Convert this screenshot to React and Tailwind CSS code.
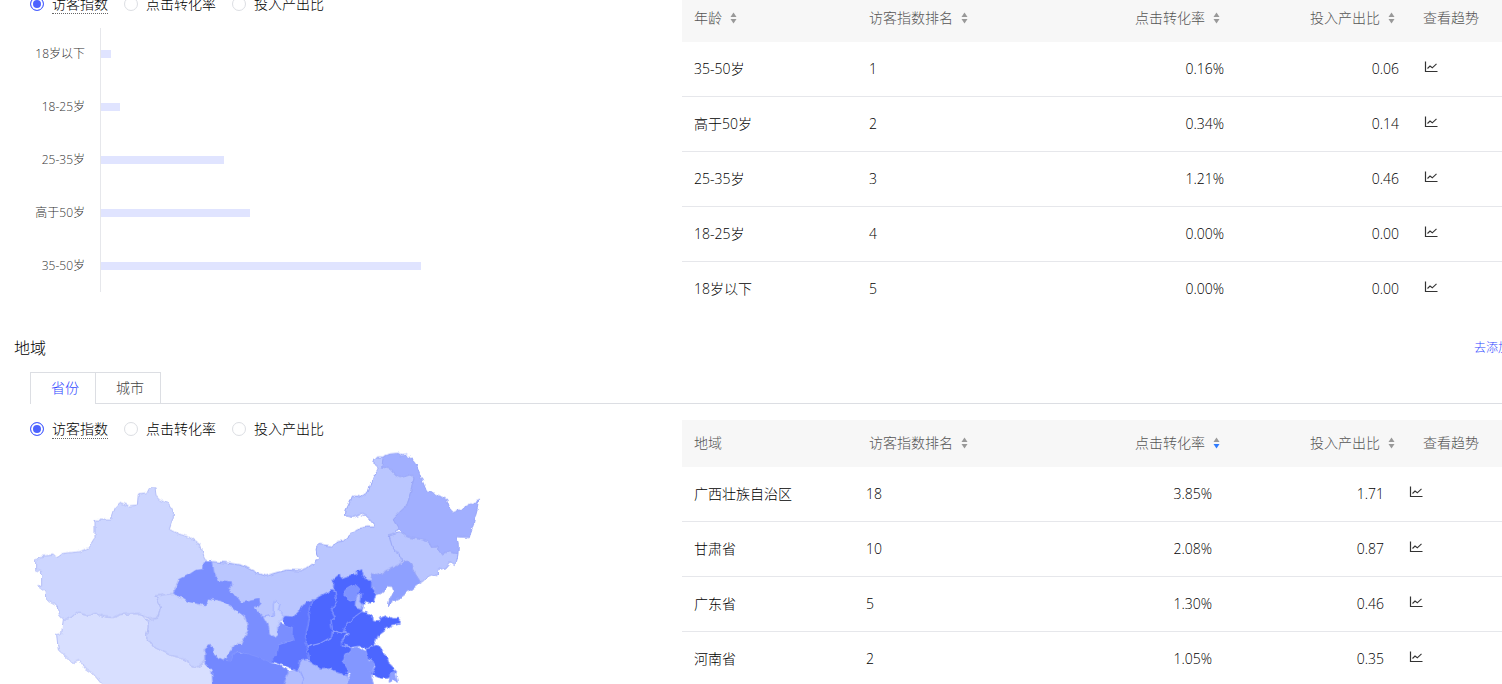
const METRICS = ['访客指数', '点击转化率', '投入产出比'];

const AGE_BARS = [
    { label: '18岁以下', value: 1.8 },
    { label: '18-25岁', value: 3.3 },
    { label: '25-35岁', value: 21.1 },
    { label: '高于50岁', value: 25.6 },
    { label: '35-50岁', value: 55.1 },
];

const AGE_ROWS = [
    ['35-50岁', '1', '0.16%', '0.06'],
    ['高于50岁', '2', '0.34%', '0.14'],
    ['25-35岁', '3', '1.21%', '0.46'],
    ['18-25岁', '4', '0.00%', '0.00'],
    ['18岁以下', '5', '0.00%', '0.00'],
];

const REGION_ROWS = [
    ['广西壮族自治区', '18', '3.85%', '1.71'],
    ['甘肃省', '10', '2.08%', '0.87'],
    ['广东省', '5', '1.30%', '0.46'],
    ['河南省', '2', '1.05%', '0.35'],
];

const WEST = [
    { name: '西藏', fill: '#d8dfff', d: 'M100 448L120 445L140 427L170 436L200 430L225 441L250 442L275 433L330 430L350 450L355 470L350 500L370 530L420 555L460 565L480 585L505 590L525 573L540 585L550 610L552 660L235 660L215 642L190 612L165 595L150 572L130 578L85 540L80 495L95 490Z' },
    { name: '新疆', fill: '#cdd6ff', d: 'M100 448L88 435L85 410L48 390L45 365L22 348L35 345L35 305L17 300L17 275L30 260L68 255L80 263L100 250L150 245L178 232L195 205L195 155L190 150L243 150L255 115L270 97L295 108L322 105L325 72L350 68L358 52L375 53L378 75L392 90L415 100L430 120L430 140L418 178L440 190L475 200L512 225L522 260L530 273L522 295L445 330L428 370L378 378L392 410L385 440L350 445L330 430L275 433L250 442L225 441L200 430L170 436L140 427L120 445Z' },
    { name: '青海', fill: '#c9d3ff', d: 'M378 378L430 370L450 385L515 405L535 380L600 400L640 435L655 480L635 520L605 530L615 555L605 572L555 565L540 523L522 535L525 570L505 590L480 585L460 565L420 555L370 530L350 500L355 470L350 450L385 440L392 410Z' },
];

const NORTH = [
    { name: '内蒙古', fill: '#bac6ff', d: 'M222 58L222 48L232 36L255 36L335 82L342 100L330 150L290 260L305 350L225 435L110 480L0 520L-80 515L-110 517L-130 500L-190 480L-240 435L-270 395L-280 355L-262 350L-220 353L-180 360L-165 365L-130 383L-102 393L-75 385L-40 375L0 377L20 370L40 355L57 340L50 330L48 308L60 298L95 303L115 290L130 288L155 265L180 250L200 246L222 246L222 240L205 218L185 208L160 217L135 212L138 195L150 170L157 150L180 157L205 140L215 105L235 70Z' },
    { name: '黑龙江', fill: '#a1afff', d: 'M245 65L250 35L270 27L292 25L303 32L320 30L340 48L352 65L362 95L380 140L402 145L420 155L440 163L448 185L460 200L485 192L515 175L536 166L532 190L525 215L520 240L512 262L508 278L470 275L475 300L474 328L450 320L425 330L410 305L395 308L385 290L350 280L318 275L300 258L283 230L280 220L300 200L320 182L328 155L335 130L342 100L335 88L300 98L285 90L270 72Z' },
    { name: '吉林', fill: '#b9c5ff', d: 'M268 272L300 262L318 275L350 280L385 290L395 308L410 305L425 330L450 320L474 328L470 348L460 358L450 350L435 368L415 375L415 392L395 390L380 395L370 408L362 412L345 385L335 355L318 345L305 350L300 325L285 318L275 300Z' },
    { name: '辽宁', fill: '#8ea0ff', d: 'M218 382L228 392L245 385L275 370L305 355L318 345L335 355L345 385L362 412L340 430L325 440L310 452L290 462L265 483L268 465L280 440L278 425L262 423L250 440L235 448L225 440L215 420L213 400Z' },
];

const CENTER_WEST = [
    { name: '四川', fill: '#7388ff', d: 'M135 325L150 313L160 320L162 345L190 360L215 363L220 345L228 335L300 345L335 370L360 375L385 395L370 450L160 450L155 390L135 370Z' },
    { name: '甘肃', fill: '#7a8eff', d: 'M132 65L158 65L162 95L172 120L215 125L215 140L205 155L225 165L245 188L298 177L300 188L285 205L305 228L318 235L330 270L335 288L348 292L358 250L400 262L398 300L370 310L355 315L352 345L335 370L290 350L240 335L228 335L220 345L215 363L190 360L225 315L245 315L265 270L255 230L220 205L185 182L145 175L135 195L85 185L40 160L60 118L85 105L108 90L130 88Z' },
    { name: '宁夏', fill: '#c6d1ff', d: 'M312 232L340 225L340 195L350 182L360 190L355 210L372 228L352 260L355 285L345 293L328 280L325 255Z' },
    { name: '重庆', fill: '#b0bdff', d: 'M385 395L415 388L432 410L425 450L365 450Z' },
    { name: '陕西', fill: '#5e75ff', d: 'M460 178L440 185L420 210L400 230L375 228L368 240L375 255L400 262L398 300L370 310L355 315L352 345L338 350L338 365L360 372L415 395L418 362L453 360L440 320L443 270L455 230Z' },
];

const CENTER_EAST = [
    { name: '湖北', fill: '#adbbff', d: 'M-5 665L-3 648L15 645L35 652L60 668L90 668L100 680L140 690L150 735L0 735L10 700Z' },
    { name: '安徽', fill: '#8397ff', d: 'M155 610L170 603L185 612L197 620L205 645L222 650L220 668L212 690L225 735L140 735L150 690L128 655L135 630L150 625Z' },
    { name: '江苏', fill: '#4c66ff', d: 'M197 612L225 600L240 605L262 640L270 660L290 680L285 690L260 700L245 700L212 690L225 665L215 645L203 640Z' },
    { name: '上海', fill: '#8fa0ff', d: 'M270 685L285 680L292 712L280 705L268 712Z' },
    { name: '河南', fill: '#4c66ff', d: 'M18 607L60 595L95 575L97 557L130 565L145 563L125 585L125 598L155 610L150 625L135 630L128 650L145 675L140 690L100 680L90 668L60 670L30 650L25 625Z' },
    { name: '山西', fill: '#4c66ff', d: 'M40 465L65 450L95 435L105 440L110 470L95 495L105 515L93 525L97 555L95 575L60 595L20 605L15 590L28 520L25 500Z' },
    { name: '河北', fill: '#4c66ff', d: 'M102 400L118 388L122 400L150 390L168 388L168 378L185 373L190 392L200 408L215 410L215 430L228 445L222 470L210 475L200 468L190 480L185 505L160 518L135 545L130 565L97 555L93 525L105 515L95 495L110 470L105 440L100 430Z' },
    { name: '山东', fill: '#4c66ff', d: 'M185 500L205 505L215 512L217 528L235 530L240 518L262 512L275 520L298 520L298 535L275 540L255 555L235 570L225 595L200 612L175 600L150 605L125 598L125 585L145 570L130 560L135 545L160 518Z' },
    { name: '北京', fill: '#7e93ff', d: 'M135 435L150 425L165 418L178 430L175 445L165 462L150 465L135 455Z' },
    { name: '天津', fill: '#b0bdff', d: 'M168 455L185 446L182 470L190 480L185 490L165 485Z' },
];

function Provinces({ items, stroke, ...rest }) {
    return (
        <g stroke={stroke} {...rest}>
            {items.map((p) => (
                <path key={p.name} d={p.d} fill={p.fill} />
            ))}
        </g>
    );
}

function ChinaMap() {
    return (
        <svg viewBox="0 0 1380 702" className="mt-3 block w-[460px]" role="img" aria-label="省份">
            {/* Uneven borders */}
            <filter id="coast" x="0" y="0" width="1380" height="702" filterUnits="userSpaceOnUse" colorInterpolationFilters="sRGB">
                <feTurbulence type="fractalNoise" baseFrequency="0.05" numOctaves="2" seed="4" />
                <feDisplacementMap in="SourceGraphic" scale="14" xChannelSelector="R" yChannelSelector="G" />
            </filter>
            <g filter="url(#coast)" strokeWidth="3" strokeLinejoin="round">
                <Provinces items={WEST} stroke="#b3bdf7" transform="translate(0 60)" />
                <Provinces items={NORTH} stroke="#98a6f8" transform="translate(810 -15)" />
                <Provinces items={CENTER_WEST} stroke="#8698ff" strokeOpacity="0.6" transform="translate(390 270)" />
                <Provinces items={CENTER_EAST} stroke="#8a9cff" transform="translate(810 -15)" />
            </g>
        </svg>
    );
}

function SortIcon({ active }) {
    return (
        <svg viewBox="0 0 7 12" className="h-3 w-[7px] shrink-0" aria-hidden="true">
            <path d="M3.5 0.5L6.5 5H0.5Z" fill="#999" />
            <path d="M3.5 11.5L6.5 7H0.5Z" fill={active ? '#2f7bff' : '#999'} />
        </svg>
    );
}

function TrendIcon() {
    return (
        <svg viewBox="0 0 14 12" className="h-3 w-[14px]" fill="none" stroke="#333" aria-hidden="true">
            <path d="M1.5 0.5V10.5H13.5" strokeWidth="1.2" />
            <path d="M3.5 7.5L6 5L8.3 6.8L12.5 2.8" strokeWidth="1.1" />
        </svg>
    );
}

function MetricRadios({ name }) {
    return (
        <div className="flex h-[18px] items-center gap-4">
            {METRICS.map((metric, i) => (
                <label key={metric} className="flex items-center gap-2">
                    <input
                        type="radio"
                        name={name}
                        defaultChecked={i === 0}
                        className="size-[14px] appearance-none rounded-full border border-[#dcdee3] bg-white checked:border-[#4d63ff] checked:bg-[#4d63ff] checked:shadow-[inset_0_0_0_2px_white]"
                    />
                    <span className={`leading-[18px] border-b border-dotted ${i === 0 ? 'border-[#666]' : 'border-transparent'}`}>
                        {metric}
                    </span>
                </label>
            ))}
        </div>
    );
}

function AgeChart() {
    return (
        <div className="mt-[15px] flex h-[264px] flex-col">
            {AGE_BARS.map((bar) => (
                <div key={bar.label} className="flex flex-1 items-center">
                    <span className="mr-[15px] w-[55px] whitespace-nowrap text-right text-xs leading-4 text-[#333]">{bar.label}</span>
                    <div className="flex flex-1 items-center self-stretch border-l border-[#e6e7eb]">
                        <div className="h-2 bg-[#e0e4ff]" style={{ width: `${bar.value}%` }} />
                    </div>
                </div>
            ))}
        </div>
    );
}

function Columns({ narrow }) {
    const side = narrow ? 'w-[172px]' : 'w-[175px]';
    return (
        <colgroup>
            <col className={side} />
            <col />
            <col className={side} />
            <col className={side} />
            <col className={narrow ? 'w-[106px]' : 'w-[91px]'} />
        </colgroup>
    );
}

function RankTable({ title, rows, sortableTitle, sorted, narrow }) {
    return (
        <div className="min-w-0 flex-1">
            <table className="w-full table-fixed">
                <Columns />
                <thead>
                    <tr className="h-[47px] bg-[#f7f7f7] text-left text-[#555] *:pb-[2px] *:font-light">
                        <th className="px-3">
                            <span className="flex items-center gap-2">{title}{sortableTitle && <SortIcon />}</span>
                        </th>
                        <th className="px-3">
                            <span className="flex items-center gap-2">访客指数排名<SortIcon /></span>
                        </th>
                        <th className="pr-4">
                            <span className="flex items-center justify-end gap-2">点击转化率<SortIcon active={sorted} /></span>
                        </th>
                        <th className="pr-4">
                            <span className="flex items-center justify-end gap-2">投入产出比<SortIcon /></span>
                        </th>
                        <th className="whitespace-nowrap pl-3">查看趋势</th>
                    </tr>
                </thead>
            </table>
            <table className="w-full table-fixed border-separate border-spacing-0">
                <Columns narrow={narrow} />
                <tbody>
                    {rows.map(([label, rank, rate, roi]) => (
                        <tr key={label} className="h-[55px] *:border-b *:border-[#e6e7eb] last:*:border-transparent">
                            <td className="px-3">{label}</td>
                            <td className="px-3">{rank}</td>
                            <td className="px-3 text-right">{rate}</td>
                            <td className="px-3 text-right">{roi}</td>
                            <td className="pl-[13px]">
                                <button aria-label={`${label} 查看趋势`} className="block pb-1">
                                    <TrendIcon />
                                </button>
                            </td>
                        </tr>
                    ))}
                </tbody>
            </table>
        </div>
    );
}

export default function App() {
    return (
        <div className="h-screen overflow-hidden bg-white font-['Open_Sans','Noto_Sans_CJK_SC',sans-serif] text-sm font-light text-black">
            {/* Age */}
            <section className="-mt-[5px] flex">
                <div className="w-[682px] shrink-0 pl-[30px]">
                    <MetricRadios name="age-metric" />
                    <AgeChart />
                </div>
                <RankTable title="年龄" rows={AGE_ROWS} sortableTitle />
            </section>

            {/* Region */}
            <section>
                <div className="mt-[19px] flex items-center justify-between pl-[14px]">
                    <h2 className="text-base leading-6">地域</h2>
                    <a href="#add" className="-mr-2 text-xs text-[#2f48ff]">去添加</a>
                </div>
                <div className="mt-3 ml-[30px] flex border-b border-[#dcdee3]" role="tablist">
                    <button role="tab" aria-selected="true" className="-mb-px h-8 border-t border-l border-[#dcdee3] bg-white pr-4 pb-px pl-5 text-[#2f48ff]">
                        省份
                    </button>
                    <button role="tab" aria-selected="false" className="h-[31px] border-x border-t border-[#dcdee3] pr-4 pl-5 text-[#444]">
                        城市
                    </button>
                </div>
                <div className="mt-4 flex">
                    <div className="w-[682px] shrink-0 pl-[30px]">
                        <MetricRadios name="region-metric" />
                        <ChinaMap />
                    </div>
                    <RankTable title="地域" rows={REGION_ROWS} sorted narrow />
                </div>
            </section>
        </div>
    );
}
